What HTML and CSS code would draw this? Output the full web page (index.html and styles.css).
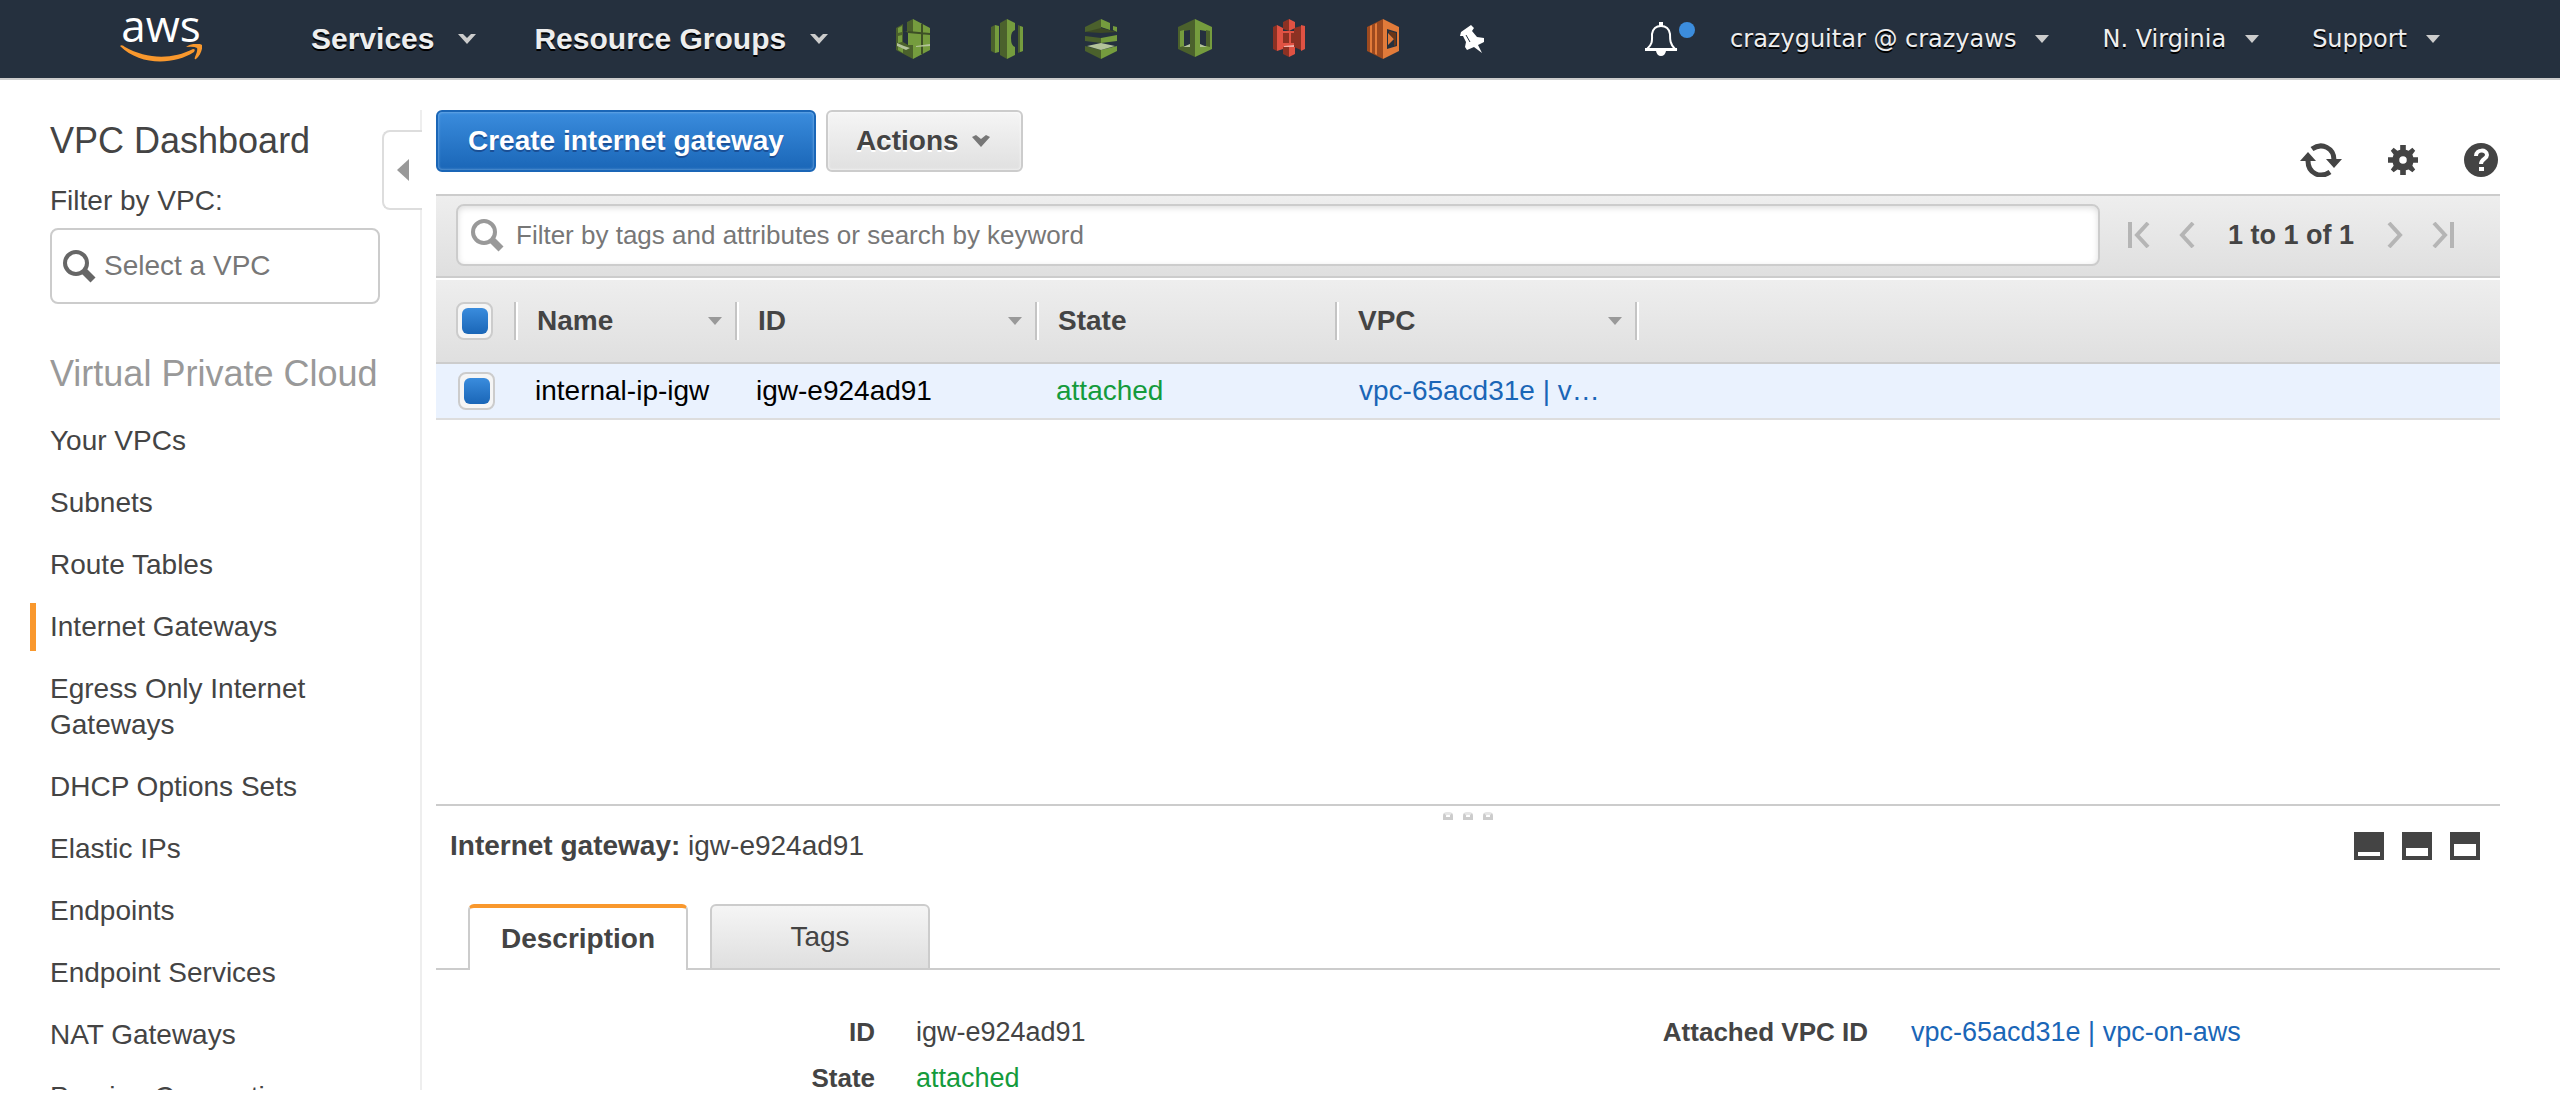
FILE: index.html
```html
<!DOCTYPE html>
<html lang="en">
<head>
    <meta charset="UTF-8">
    <meta name="viewport" content="width=device-width, initial-scale=1.0">
    <title>VPC Management Console</title>
    <link rel="stylesheet" href="styles.css">
</head>
<body>
    <header class="topbar">
        <a class="logo" href="#" aria-label="aws home">
            <span class="logo-text">aws</span>
            <svg class="logo-smile" viewBox="0 0 82 18">
                <path d="M0 2 Q2 0 5 3 C26 15 52 16 73 5 Q76 5 74 8 C54 21 20 22 0 2Z"/>
                <path d="M66 3 C71 -1 80 -1 82 1 C83 5 80 12 76 15 Q74 16 75 13 Q78 6 77 4 Q74 2 66 3Z"/>
            </svg>
        </a>
        <nav class="main-nav">
            <button class="nav-item">Services
                <svg class="caret-lg" viewBox="0 0 18 10"><path d="M0 0H5L9 4L13 0H18L9 10Z"/></svg>
            </button>
            <button class="nav-item">Resource Groups
                <svg class="caret-lg" viewBox="0 0 18 10"><path d="M0 0H5L9 4L13 0H18L9 10Z"/></svg>
            </button>
        </nav>
        <div class="shortcuts">
            <a href="#" aria-label="Shortcut 1">
                <svg viewBox="0 0 34 40">
                    <path fill="#4b612c" d="M17 0L11 3V12L7 13V5L0 9V31L17 40Z"/>
                    <path fill="#759c3e" d="M17 0L34 9V31L17 40ZM2 9L6 7V13L2 14ZM2 17L6 16V23L2 24ZM2 28L7 29V34L2 31ZM12 14H17V26H12Z"/>
                    <path fill="#25303e" d="M7 13Q10 11 12 14V26L7 23Z"/>
                    <path fill="#3d4f26" d="M12 12L34 14V16L12 14ZM25 5H27V35H25Z"/>
                    <path fill="#b3c39a" d="M1 24L8 27L14 29L10 31L1 27ZM20 27L34 25V27L20 28Z"/>
                </svg>
            </a>
            <a href="#" aria-label="Shortcut 2">
                <svg viewBox="0 0 34 40">
                    <path fill="#4b612c" d="M1 8L5 6V34L1 32ZM10 4L17 0V40L10 36ZM28 6L33 8V32L28 34Z"/>
                    <path fill="#759c3e" d="M5 6L9 7V33L5 34ZM17 0L25 4V11Q21 12 21 19Q21 27 25 28V36L17 40ZM30 7L33 8V32L30 33Z"/>
                </svg>
            </a>
            <a href="#" aria-label="Shortcut 3">
                <svg viewBox="0 0 34 40">
                    <path fill="#4b612c" d="M1 8L17 0V12L1 13ZM1 17L17 19V24L1 22ZM1 27L17 31V40L1 32Z"/>
                    <path fill="#759c3e" d="M17 0L26 4V11L17 8ZM29 7L33 8V13L29 11ZM17 19L33 16V22L17 24ZM17 31L33 27V32L17 40Z"/>
                    <path fill="#3d4a25" d="M1 13L17 9L33 13L17 14Z"/>
                    <path fill="#b3c39a" d="M3 27L17 24L31 27L17 31Z"/>
                </svg>
            </a>
            <a href="#" aria-label="Shortcut 4">
                <svg viewBox="0 0 34 40">
                    <path fill="#4b612c" fill-rule="evenodd" d="M17 0V38L0 30V8ZM6 12V27L12 27V11Z"/>
                    <path fill="#759c3e" fill-rule="evenodd" d="M17 0L34 8V30L17 38ZM22 11V27L28 27V12Z"/>
                    <path fill="#759c3e" d="M2 12L6 11V27L2 28Z"/>
                    <path fill="#4b612c" d="M28 11L32 12V28L28 27Z"/>
                    <path fill="#b3c39a" d="M5 28L12 25V28ZM22 25L29 28H22Z"/>
                </svg>
            </a>
            <a href="#" aria-label="Shortcut 5">
                <svg viewBox="0 0 34 40">
                    <path fill="#8c3123" d="M1 8L5 6V32L1 30ZM17 0L11 3V10L17 12ZM17 38L11 35V28H17ZM22 9L29 7V31L22 28Z"/>
                    <path fill="#e05243" d="M5 6L11 9V12H22V28H11V30L5 32ZM17 0L23 3V9L17 12ZM17 28H23V35L17 38ZM29 6L33 7V30L29 32Z"/>
                    <path fill="#8c3123" d="M11 14H17V24H11ZM19 14H25V24H19Z"/>
                    <path fill="#efb0a8" d="M12 27L22 26V28H12Z"/>
                </svg>
            </a>
            <a href="#" aria-label="Shortcut 6">
                <svg viewBox="0 0 34 40">
                    <path fill="#9d4a1f" d="M1 8L17 0V40L1 32Z"/>
                    <path fill="#e27b3a" fill-rule="evenodd" d="M17 0L33 8V32L17 40ZM21 10V30L31 27V13Z"/>
                    <path fill="#e27b3a" d="M4 7L6 6V34L4 33ZM9 5L11 4V36L9 35ZM22 14L28 20L22 26Z"/>
                    <path fill="#6b3516" d="M23 12L30 14V26L28 27V20L23 14Z"/>
                </svg>
            </a>
            <a class="pin" href="#" aria-label="Edit shortcuts">
                <svg viewBox="0 0 26 28">
                    <path fill="#fff" d="M1 7L11 0L14 3L12 6L17 12L24 13L24 17L18 20L22 28L14 22L7 25L5 22L6 17L3 11L0 11Z"/>
                    <path stroke="#25303e" fill="none" d="M6 10L10 17"/>
                </svg>
            </a>
        </div>
        <div class="account-nav">
            <button class="bell" aria-label="Notifications">
                <svg viewBox="0 0 50 34">
                    <path fill="none" stroke="#fff" stroke-width="2" d="M2 27C8 22 7 18 7 12C8 6 11 4 16 4C21 4 24 6 25 12C25 18 25 22 30 27Z"/>
                    <path fill="#fff" d="M0 26H32V29H0ZM14 0H18V4H14ZM11 29H21Q20 34 16 34Q12 34 11 29Z"/>
                    <circle cx="42" cy="8" r="8" fill="#3c8ddd"/>
                </svg>
            </button>
            <button class="account-item">crazyguitar @ crazyaws
                <svg class="caret-sm" viewBox="0 0 14 8"><path d="M0 0H14L7 8Z"/></svg>
            </button>
            <button class="account-item">N. Virginia
                <svg class="caret-sm" viewBox="0 0 14 8"><path d="M0 0H14L7 8Z"/></svg>
            </button>
            <button class="account-item">Support
                <svg class="caret-sm" viewBox="0 0 14 8"><path d="M0 0H14L7 8Z"/></svg>
            </button>
        </div>
    </header>

    <div class="page">
        <aside class="sidebar">
            <a class="dashboard-link" href="#">VPC Dashboard</a>
            <label class="filter-label" for="vpc-filter">Filter by VPC:</label>
            <div class="vpc-select">
                <svg class="search-icon" viewBox="0 0 34 34"><circle cx="14" cy="14" r="11"/><path d="M22 22L31 31"/></svg>
                <input id="vpc-filter" type="text" placeholder="Select a VPC">
            </div>
            <h2>Virtual Private Cloud</h2>
            <ul class="side-nav">
                <li><a href="#">Your VPCs</a></li>
                <li><a href="#">Subnets</a></li>
                <li><a href="#">Route Tables</a></li>
                <li class="active"><a href="#">Internet Gateways</a></li>
                <li><a href="#">Egress Only Internet Gateways</a></li>
                <li><a href="#">DHCP Options Sets</a></li>
                <li><a href="#">Elastic IPs</a></li>
                <li><a href="#">Endpoints</a></li>
                <li><a href="#">Endpoint Services</a></li>
                <li><a href="#">NAT Gateways</a></li>
                <li><a href="#">Peering Connections</a></li>
            </ul>
            <button class="collapse" aria-label="Collapse sidebar">
                <svg viewBox="0 0 12 22"><path d="M12 0V22L0 11Z"/></svg>
            </button>
        </aside>

        <main class="content">
            <div class="actions">
                <button class="btn btn-primary">Create internet gateway</button>
                <button class="btn btn-menu">Actions
                    <svg viewBox="0 0 20 12"><path d="M1 2L5 0L10 4L15 0L19 2L10 12Z"/></svg>
                </button>
                <div class="tools">
                    <button aria-label="Refresh">
                        <svg class="refresh" viewBox="0 0 42 34">
                            <path class="arc" d="M12 6C22 -1 34 5 34 17M30 29C20 36 8 30 8 18"/>
                            <path d="M26 16H42L34 25ZM0 18H16L8 9Z"/>
                        </svg>
                    </button>
                    <button aria-label="Settings">
                        <svg viewBox="0 0 32 32">
                            <path fill-rule="evenodd" d="M13 0H19V5L22 6L26 3L29 6L26 10L27 13H32V19H27L26 22L29 26L26 29L22 26L19 27V32H13V27L10 26L6 29L3 26L6 22L5 19H0V13H5L6 10L3 6L6 3L10 6L13 5ZM16 12A4 4 0 1 0 16 20A4 4 0 1 0 16 12Z"/>
                        </svg>
                    </button>
                    <button aria-label="Help">
                        <svg class="help" viewBox="0 0 34 34">
                            <circle cx="17" cy="17" r="17"/>
                            <path class="mark" d="M12 13C12 6 23 6 23 12C23 16 17 16 17 21"/>
                            <path fill="#fff" d="M15 24H20V28H15Z"/>
                        </svg>
                    </button>
                </div>
            </div>

            <div class="filter-bar">
                <div class="search-box">
                    <svg class="search-icon" viewBox="0 0 34 34"><circle cx="14" cy="14" r="11"/><path d="M22 22L31 31"/></svg>
                    <input type="text" aria-label="Filter" placeholder="Filter by tags and attributes or search by keyword">
                </div>
                <div class="pager">
                    <button aria-label="First page"><svg viewBox="0 0 22 26"><path d="M2 0V26M20 1L9 13L20 25"/></svg></button>
                    <button aria-label="Previous page"><svg viewBox="0 0 22 26"><path d="M17 1L6 13L17 25"/></svg></button>
                    <span>1 to 1 of 1</span>
                    <button aria-label="Next page"><svg viewBox="0 0 22 26"><path d="M5 1L16 13L5 25"/></svg></button>
                    <button aria-label="Last page"><svg viewBox="0 0 22 26"><path d="M2 1L13 13L2 25M20 0V26"/></svg></button>
                </div>
            </div>

            <div class="table-pane">
                <table>
                    <colgroup>
                        <col class="col-check">
                        <col class="col-name">
                        <col class="col-data">
                        <col class="col-data">
                        <col class="col-data">
                        <col>
                    </colgroup>
                    <thead>
                        <tr>
                            <th class="check"><input type="checkbox" checked aria-label="Select all"></th>
                            <th><div class="col-head">Name<svg viewBox="0 0 14 8"><path d="M0 0H14L7 8Z"/></svg></div></th>
                            <th><div class="col-head">ID<svg viewBox="0 0 14 8"><path d="M0 0H14L7 8Z"/></svg></div></th>
                            <th><div class="col-head">State</div></th>
                            <th><div class="col-head">VPC<svg viewBox="0 0 14 8"><path d="M0 0H14L7 8Z"/></svg></div></th>
                            <th><div class="col-head"></div></th>
                        </tr>
                    </thead>
                    <tbody>
                        <tr>
                            <td class="check"><input type="checkbox" checked aria-label="Select internal-ip-igw"></td>
                            <td>internal-ip-igw</td>
                            <td>igw-e924ad91</td>
                            <td class="ok">attached</td>
                            <td class="vpc"><a href="#">vpc-65acd31e | vpc-on-aws</a></td>
                            <td></td>
                        </tr>
                    </tbody>
                </table>
            </div>

            <section class="details">
                <div class="grip"><i></i><i></i><i></i></div>
                <div class="details-head">
                    <p><b>Internet gateway:</b> igw-e924ad91</p>
                    <div class="pane-size">
                        <button aria-label="Small pane"><svg viewBox="0 0 30 28"><path fill-rule="evenodd" d="M0 0H30V28H0ZM4 20V24H26V20Z"/></svg></button>
                        <button aria-label="Half pane"><svg viewBox="0 0 30 28"><path fill-rule="evenodd" d="M0 0H30V28H0ZM4 16V24H26V16Z"/></svg></button>
                        <button aria-label="Full pane"><svg viewBox="0 0 30 28"><path fill-rule="evenodd" d="M0 0H30V28H0ZM4 12V24H26V12Z"/></svg></button>
                    </div>
                </div>
                <div class="tabs">
                    <button class="tab active">Description</button>
                    <button class="tab">Tags</button>
                </div>
                <div class="fields">
                    <dl>
                        <dt>ID</dt>
                        <dd>igw-e924ad91</dd>
                        <dt>State</dt>
                        <dd class="ok">attached</dd>
                    </dl>
                    <dl class="narrow">
                        <dt>Attached VPC ID</dt>
                        <dd><a href="#">vpc-65acd31e | vpc-on-aws</a></dd>
                    </dl>
                </div>
            </section>
        </main>
    </div>
</body>
</html>
```
FILE: styles.css
```css
:root {
    --nav-bg: #25303e;
    --text: #444;
    --muted: #999;
    --border: #ccc;
    --link: #1a66b7;
    --green: #149b3c;
    --orange: #f9982d;
}

* {
    box-sizing: border-box;
}
body {
    display: flex;
    flex-direction: column;
    height: 100vh;
    margin: 0;
    font-family: "Liberation Sans", Arial, sans-serif;
    font-size: 28px;
    line-height: 36px;
    color: var(--text);
    background: #fff;
    overflow: hidden;
}
button {
    display: flex;
    align-items: center;
    padding: 0;
    border: 0;
    background: none;
    color: inherit;
    font: inherit;
    cursor: pointer;
}
input {
    font: inherit;
    color: var(--text);
}
input::placeholder {
    color: #777;
    opacity: 1;
}
a {
    color: var(--link);
    text-decoration: none;
}
svg {
    display: block;
    flex: none;
}
.ok {
    color: var(--green);
}

/* top bar */
.topbar {
    display: flex;
    flex: none;
    align-items: center;
    height: 80px;
    padding: 0 120px;
    border-bottom: 2px solid #ccc;
    background: var(--nav-bg);
    color: #eee;
}
.logo {
    display: flex;
    flex-direction: column;
    align-items: center;
    width: 82px;
    height: 66px;
    margin-right: 109px;
}
.logo-text {
    height: 38px;
    font: 44px/38px "Open Sans", sans-serif;
    color: #fff;
}
.logo-smile {
    width: 82px;
    height: 18px;
    fill: var(--orange);
}
.main-nav {
    display: flex;
    gap: 58px;
}
.nav-item {
    gap: 24px;
    font-size: 30px;
    font-weight: bold;
    text-shadow: 0 2px 0 #000;
}
.caret-lg {
    width: 18px;
    height: 10px;
    fill: #ccc;
}
.shortcuts {
    display: flex;
    align-items: center;
    gap: 60px;
    margin-left: 68px;
}
.shortcuts svg {
    width: 34px;
    height: 40px;
}
.shortcuts .pin svg {
    width: 26px;
    height: 28px;
}
.account-nav {
    display: flex;
    align-items: center;
    gap: 53px;
    margin-left: auto;
}
.bell {
    margin-right: -18px;
}
.bell svg {
    width: 50px;
    height: 34px;
}
.account-item {
    gap: 19px;
    font-family: "DejaVu Sans", Verdana, sans-serif;
    font-size: 24px;
    text-shadow: 0 2px 0 #000;
}
.caret-sm {
    width: 14px;
    height: 8px;
    fill: #ccc;
}

/* sidebar */
.page {
    display: flex;
    flex: 1;
    gap: 14px;
    min-height: 0;
    margin: 30px 60px 18px 0;
}
.sidebar {
    position: relative;
    flex: none;
    width: 422px;
    padding: 10px 42px 0 50px;
    box-shadow: inset -2px 0 0 #eee;
    overflow: hidden;
}
.dashboard-link,
.sidebar h2 {
    display: block;
    margin: 0;
    font-size: 36px;
    font-weight: normal;
    line-height: 42px;
    color: var(--text);
    white-space: nowrap;
}
.sidebar h2 {
    margin: 49px 0 22px;
    color: var(--muted);
}
.filter-label {
    display: block;
    margin: 21px 0 9px;
}
.vpc-select,
.search-box {
    display: flex;
    align-items: center;
    border: 2px solid var(--border);
    border-radius: 8px;
    background: #fff;
}
.vpc-select {
    gap: 8px;
    height: 76px;
    padding: 0 10px;
}
.vpc-select input,
.search-box input {
    flex: 1;
    min-width: 0;
    padding: 0;
    border: 0;
    outline: 0;
    background: none;
}
.search-icon {
    width: 34px;
    height: 34px;
    fill: none;
    stroke: #666;
    stroke-width: 4;
}
.search-icon path {
    stroke-width: 7;
}
.side-nav {
    display: flex;
    flex-direction: column;
    gap: 14px;
    margin: 0 0 0 -20px;
    padding: 0;
    list-style: none;
}
.side-nav li {
    padding: 6px 14px;
    border-left: 6px solid transparent;
}
.side-nav li.active {
    border-color: var(--orange);
}
.side-nav a {
    display: block;
    color: var(--text);
}
.collapse {
    position: absolute;
    top: 20px;
    right: 0;
    justify-content: center;
    width: 40px;
    height: 80px;
    border: 2px solid #ddd;
    border-right: 0;
    border-radius: 8px 0 0 8px;
    background: #fff;
}
.collapse svg {
    width: 12px;
    height: 22px;
    fill: var(--muted);
}

/* content */
.content {
    display: flex;
    flex: 1;
    flex-direction: column;
    min-width: 0;
}
.actions {
    display: flex;
    gap: 10px;
    height: 62px;
    margin-bottom: 22px;
}
.btn {
    height: 62px;
    padding: 0 30px;
    border: 2px solid var(--border);
    border-radius: 6px;
    font-weight: bold;
}
.btn-primary {
    border-color: #1a66b7;
    background: linear-gradient(#3a8cdd, #1a66b7);
    box-shadow: inset 0 0 3px #8dbdec;
    color: #fff;
    text-shadow: 0 2px 0 #1a4f95;
}
.btn-menu {
    gap: 12px;
    padding: 0 30px 0 28px;
    background: linear-gradient(#f5f5f5, #e0e0e0);
    box-shadow: inset 0 0 3px #fff;
    text-shadow: 0 2px 0 #fff;
}
.btn-menu svg {
    width: 20px;
    height: 12px;
    fill: #777;
}
.tools {
    display: flex;
    align-items: flex-end;
    gap: 46px;
    height: 67px;
    margin: 0 2px 0 auto;
}
.tools svg {
    width: 30px;
    height: 34px;
    fill: var(--text);
}
.tools .refresh {
    width: 42px;
}
.tools .help {
    width: 34px;
}
.tools .arc,
.tools .mark {
    fill: none;
    stroke: var(--text);
    stroke-width: 5;
}
.tools .mark {
    stroke: #fff;
    stroke-width: 4;
}
.filter-bar {
    display: flex;
    align-items: flex-start;
    flex: none;
    height: 84px;
    padding: 8px 46px 0 20px;
    border: solid var(--border);
    border-width: 2px 0;
    background: linear-gradient(#eee, #dfdfdf);
}
.search-box {
    flex: 1;
    gap: 12px;
    height: 62px;
    padding: 0 12px;
    box-shadow: inset 0 2px 6px #ddd;
    font-size: 26px;
}
.search-box .search-icon {
    stroke: var(--muted);
}
.pager {
    display: flex;
    align-items: center;
    gap: 26px;
    height: 62px;
    margin-left: 28px;
    font-size: 27px;
    font-weight: bold;
}
.pager span {
    margin: 0 4px;
}
.pager svg {
    width: 22px;
    height: 26px;
    fill: none;
    stroke: #b5b5b5;
    stroke-width: 4;
}

/* table */
.table-pane {
    flex: 1;
    min-height: 0;
    padding-top: 2px;
    overflow: hidden;
}
table {
    width: 100%;
    border-spacing: 0;
    table-layout: fixed;
}
.col-check {
    width: 78px;
}
.col-name {
    width: 221px;
}
.col-data {
    width: 300px;
}
th {
    height: 84px;
    padding: 0;
    border-bottom: 2px solid var(--border);
    text-align: left;
}
thead tr {
    background: linear-gradient(#eee, #dfdfdf);
}
.col-head {
    display: flex;
    align-items: center;
    justify-content: space-between;
    height: 38px;
    padding: 0 13px 0 21px;
    border-left: 2px solid #c4c4c4;
    box-shadow: inset 2px 0 0 #fff;
}
.col-head svg {
    width: 14px;
    height: 8px;
    fill: var(--muted);
}
td {
    height: 56px;
    padding: 0 22px 0 21px;
    border-bottom: 2px solid #ddd;
    background: #eaf2fe;
    color: #000;
    overflow: hidden;
    text-overflow: ellipsis;
    white-space: nowrap;
}
td.ok {
    color: var(--green);
}
td.vpc {
    padding-left: 24px;
    color: var(--link);
}
.check {
    padding: 0 0 0 20px;
}
td.check {
    padding: 0 0 0 22px;
}
.check input {
    display: flex;
    align-items: center;
    justify-content: center;
    appearance: none;
    width: 37px;
    height: 38px;
    margin: 0;
    border: 2px solid var(--border);
    border-radius: 8px;
    background: #f5f5f5;
}
.check input:checked::before {
    content: "";
    width: 26px;
    height: 26px;
    border-radius: 6px;
    background: linear-gradient(#3a8cdd, #1a66b7);
}

/* details pane */
.details {
    flex: none;
    height: 286px;
    border-top: 2px solid var(--border);
}
.grip {
    display: flex;
    justify-content: center;
    gap: 10px;
    height: 14px;
    padding-top: 6px;
}
.grip i {
    width: 10px;
    height: 8px;
    border: 3px solid #ccc;
    border-top-color: #e5e5e5;
    border-radius: 4px 4px 0 0;
}
.details-head {
    display: flex;
    align-items: center;
    justify-content: space-between;
    height: 52px;
    padding: 0 20px 0 14px;
}
.details-head p {
    margin: 0;
}
.pane-size {
    display: flex;
    gap: 18px;
}
.pane-size svg {
    width: 30px;
    height: 28px;
    fill: var(--text);
}
.tabs {
    display: flex;
    gap: 22px;
    height: 66px;
    margin-top: 32px;
    padding: 0 32px;
    box-shadow: inset 0 -2px 0 var(--border);
}
.tab {
    justify-content: center;
    width: 220px;
    border: 2px solid var(--border);
    border-radius: 6px 6px 0 0;
    background: linear-gradient(#f5f5f5, #dfdfdf);
}
.tab.active {
    border-top: 4px solid var(--orange);
    border-bottom: 0;
    background: #fff;
    font-weight: bold;
}
.fields {
    display: grid;
    grid-template-columns: 1fr 1fr;
    padding-top: 44px;
}
dl {
    display: grid;
    grid-template-columns: 439px 1fr;
    gap: 10px 41px;
    align-content: start;
    margin: 0;
}
dl.narrow {
    grid-template-columns: 400px 1fr;
    column-gap: 43px;
}
dt {
    font-size: 26px;
    font-weight: bold;
    text-align: right;
}
dd {
    margin: 0;
    font-size: 27px;
}
```
